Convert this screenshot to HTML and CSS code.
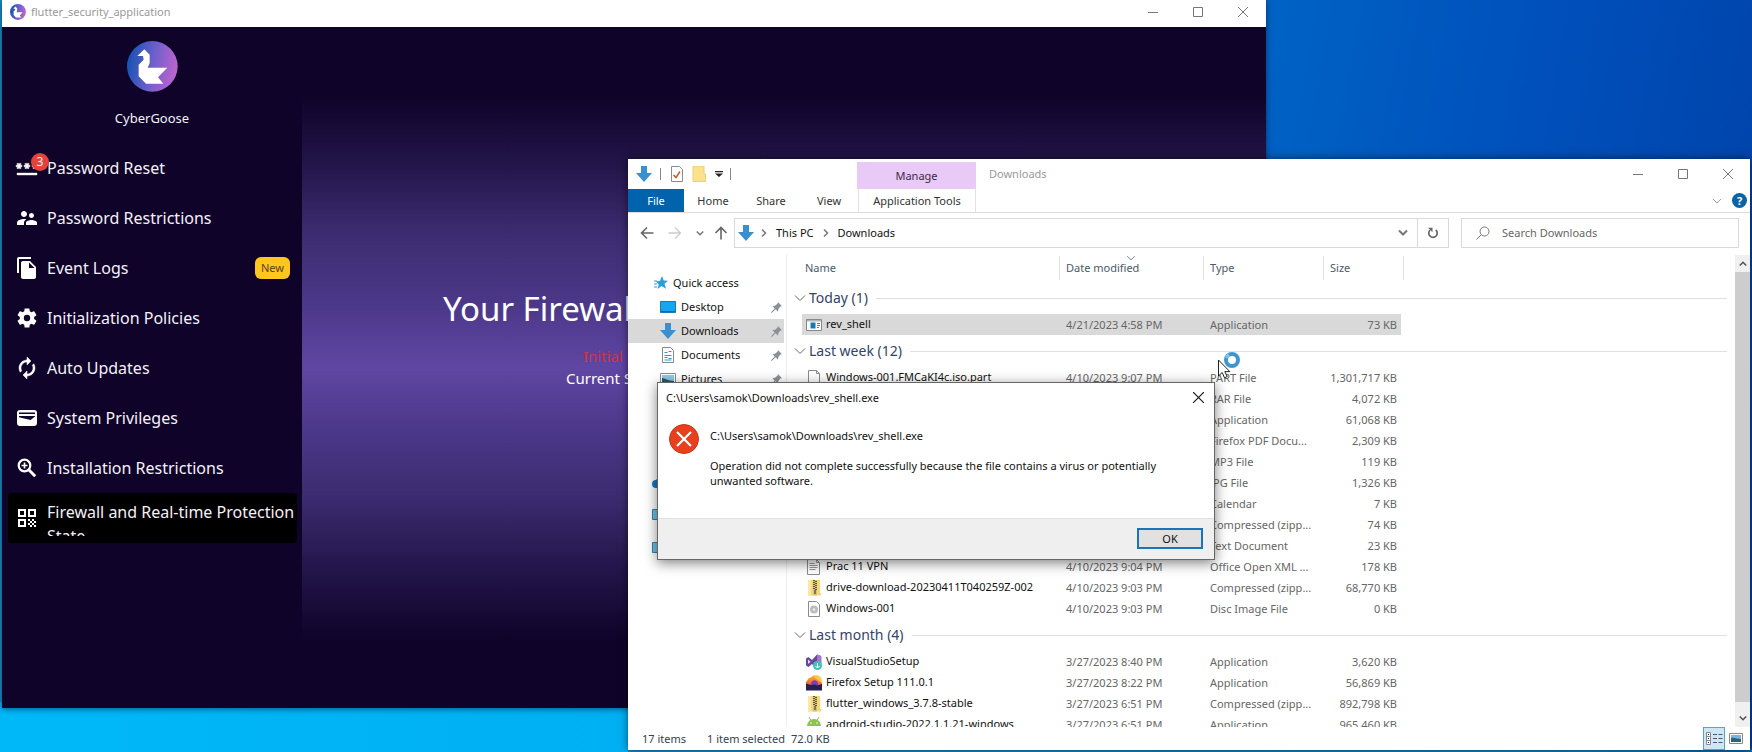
FILE: index.html
```html
<!DOCTYPE html>
<html lang="en">
<head>
<meta charset="utf-8">
<title>Desktop</title>
<link rel="stylesheet" href="styles.css">
</head>
<body>
<svg class="sprite" aria-hidden="true">
  <defs>
    <linearGradient id="goose-bg" x1="0" x2="1" y1="0.4" y2="0.6"><stop offset="0.05" stop-color="#1d54b4"/><stop offset="0.5" stop-color="#6f5fcb"/><stop offset="1" stop-color="#c264d0"/></linearGradient>
    <linearGradient id="fire" x1="0" x2="0" y1="0" y2="1"><stop offset="0" stop-color="#ffb52e"/><stop offset="1" stop-color="#f0453f"/></linearGradient>
    <symbol id="goose" viewBox="380 123 153 153"><circle cx="456" cy="199" r="76" fill="url(#goose-bg)"/><path d="M411 168l21-20 16 16v25l-6 14h59l-28 29 16 19h-52l-22-22v-35l15-15-2-11z" fill="#fff"/></symbol>
    <symbol id="down" viewBox="0 0 16 16"><path d="M5 0h6v7h5l-8 9-8-9h5z" fill="#3a8fd0"/></symbol>
    <symbol id="min" viewBox="0 0 10 10"><path d="M0 5.500h10" stroke="currentColor"/></symbol>
    <symbol id="max" viewBox="0 0 10 10"><path d="M.5.500h9v9h-9z" fill="none" stroke="currentColor"/></symbol>
    <symbol id="close" viewBox="0 0 10 10"><path d="M0 0l10 10M10 0L0 10" stroke="currentColor" fill="none"/></symbol>
    <symbol id="chev-down" viewBox="0 0 12 8"><path d="M1 1.500l5 5 5-5" stroke="currentColor" fill="none"/></symbol>
    <symbol id="chev-bold" viewBox="0 0 10 8"><path d="M1 1.500l4 4 4-4" stroke="currentColor" stroke-width="2" fill="none"/></symbol>
    <symbol id="chev-right" viewBox="0 0 6 8"><path d="M1 .500l3.500 3.500L1 7.500" stroke="#777" stroke-width="1.500" fill="none"/></symbol>
    <symbol id="pin" viewBox="0 0 12 12"><path d="M7.500 0L12 4.500l-1.700.300L8 7.500 7.700 10.500 5 8 .800 12 0 11.200 4 7 1.500 4.300l3-.300L7.200 1.700z" fill="#8a9096"/></symbol>
    <symbol id="page" viewBox="0 0 16 16"><path d="M2.500.500h8l3 3v12h-11z" fill="#fff" stroke="#8b8b8b"/><path d="M10.500.500v3h3" fill="none" stroke="#8b8b8b"/></symbol>
    <symbol id="text" viewBox="0 0 16 16"><path d="M1.500.500h9l3 3v12h-12z" fill="#fff" stroke="#8b8b8b"/><path d="M10.500.500v3h3M3.500 4.500h5M3.500 6.500h8M3.500 8.500h8M3.500 10.500h6" fill="none" stroke="#999"/></symbol>
    <symbol id="zip" viewBox="0 0 16 16"><path d="M2 0h12v13l1 0v2.500H2z" fill="#f5d873"/><path d="M2 0h3v15.500H2z" fill="#fae9a6"/><path d="M7 0h4v15.500H7z" fill="#d9c27a"/><path d="M8 0v10M10 1v9" stroke="#5d5738" stroke-dasharray="1 1" stroke-width="2"/><path d="M8 10h2v4H8z" fill="#777"/></symbol>
    <symbol id="disc" viewBox="0 0 16 16"><path d="M2.500.500h8l3 3v12h-11z" fill="#fff" stroke="#8b8b8b"/><circle cx="8" cy="8.500" r="4" fill="#b9bdc1"/><circle cx="8" cy="8.500" r="1.200" fill="#eee"/></symbol>
    <symbol id="exe" viewBox="0 0 16 16"><path d="M.5 2.500h15v11H.5z" fill="#fff" stroke="#888"/><path d="M1 3h14v1.500H1z" fill="#b5b5b5"/><path d="M4.500 5.500h5v6h-5z" fill="#1878ba"/><path d="M11 6.500h3M11 8.500h3M11 10.500h2" stroke="#777"/></symbol>
    <symbol id="vs" viewBox="0 0 16 16"><path d="M0 4.500L2.500 3 6 6l5-5.500L15 2v11l-4 2-5-5-3.500 3L0 11.500z" fill="#68489c"/><path d="M11 .500l4.500 2v10l-4.500 2z" fill="#9a7bd0"/><path d="M2 5.500v4.500l2.500-2.200z" fill="#e6dcfa"/><circle cx="11.500" cy="11.500" r="4.500" fill="#3cc4bd"/><path d="M11.500 9v4.500M9.500 12l2 2 2-2" stroke="#fff" fill="none"/></symbol>
    <symbol id="firefox" viewBox="0 0 16 16"><circle cx="10" cy="6" r="6" fill="#ffc94d"/><path d="M0 7l3-4 3-1 2-2 1 3 4 3 3 2v4H0z" fill="url(#fire)"/><path d="M5 9c0-5 7-5 7 0v4H5z" fill="#7a3fb5"/><path d="M0 9c2-1 3 1 5 1s3-1 5 0 4-1 6-1v6.500H0z" fill="#25204f"/></symbol>
    <symbol id="android" viewBox="0 0 16 16"><path d="M1 9a7 7 0 0 1 14 0z" fill="#8fc24a"/><path d="M3 0l2 3.500M13 0l-2 3.500" stroke="#8fc24a"/><circle cx="5" cy="6" r=".8" fill="#fff"/><circle cx="11" cy="6" r=".8" fill="#fff"/></symbol>
    <symbol id="monitor" viewBox="0 0 16 16"><path d="M.5 1.500h15v10H.5z" fill="#6cc3ea" stroke="#3f7fa5"/><path d="M5 14.500h6M8 12v2" stroke="#3f7fa5"/></symbol>
  </defs>
</svg>

<main class="desktop">
  <section class="app" aria-label="flutter_security_application">
    <header class="app-title">
      <svg class="app-logo"><use href="#goose"/></svg>
      <span class="app-name">flutter_security_application</span>
      <div class="win-buttons">
        <button aria-label="Minimize"><svg><use href="#min"/></svg></button>
        <button aria-label="Maximize"><svg><use href="#max"/></svg></button>
        <button aria-label="Close"><svg><use href="#close"/></svg></button>
      </div>
    </header>
    <div class="app-body">
      <aside class="sidebar">
        <div class="profile">
          <svg class="avatar"><use href="#goose"/></svg>
          <span>CyberGoose</span>
        </div>
        <nav class="menu">
          <a class="item" href="#reset"><span class="glyph"><svg viewBox="0 0 24 24"><path d="M2 17h20v2H2v-2zm1.150-4.050L4 11.470l.85 1.480 1.300-.75-.85-1.480H7v-1.500H5.300l.85-1.470L4.850 7 4 8.470 3.150 7l-1.300.75.85 1.470H1v1.500h1.700l-.85 1.480zm6.700-.75l1.300.75.85-1.480.85 1.480 1.300-.75-.85-1.480H15v-1.500h-1.700l.85-1.470-1.300-.75L12 8.470 11.150 7l-1.300.75.85 1.470H9v1.500h1.700zM23 9.220h-1.700l.85-1.470-1.300-.75L20 8.470 19.150 7l-1.300.75.85 1.470H17v1.500h1.700l-.85 1.480 1.300.75.85-1.480.85 1.480 1.300-.75-.85-1.480H23z" stroke="#fff" stroke-width=".4"/></svg><b class="count">3</b></span><span>Password Reset</span></a>
          <a class="item" href="#restrictions"><span class="glyph"><svg viewBox="0 0 24 24"><path d="M16.500 12c1.380 0 2.490-1.120 2.490-2.500S17.880 7 16.500 7 14 8.120 14 9.500s1.120 2.500 2.500 2.500zM9 11c1.660 0 2.990-1.340 2.990-3S10.660 5 9 5 6 6.340 6 8s1.340 3 3 3zm7.500 3c-1.830 0-5.500.92-5.500 2.750V19h11v-2.250c0-1.830-3.670-2.750-5.500-2.750zM9 13c-2.330 0-7 1.170-7 3.500V19h7v-2.250c0-.85.33-2.340 2.370-3.470C10.500 13.100 9.660 13 9 13z"/></svg></span><span>Password Restrictions</span></a>
          <a class="item" href="#logs"><span class="glyph"><svg viewBox="0 0 24 24"><path d="M16 1H4c-1.100 0-2 .9-2 2v14h2V3h12V1zm-1 4l6 6v10c0 1.100-.9 2-2 2H7.990C6.890 23 6 22.100 6 21l.01-14c0-1.100.89-2 1.990-2h7zm-1 7h5.500L14 6.500V12z"/></svg></span><span>Event Logs</span><em class="new">New</em></a>
          <a class="item" href="#policies"><span class="glyph"><svg viewBox="0 0 24 24"><path d="M19.140 12.940c.04-.3.06-.61.06-.94 0-.32-.02-.64-.07-.94l2.030-1.580c.18-.14.23-.41.12-.61l-1.920-3.320c-.12-.22-.37-.29-.59-.22l-2.390.96c-.5-.38-1.030-.7-1.620-.94l-.36-2.540c-.04-.24-.24-.41-.48-.41h-3.840c-.24 0-.43.17-.47.41l-.36 2.540c-.59.24-1.130.57-1.620.94l-2.390-.96c-.22-.08-.47 0-.59.22L2.740 8.870c-.12.21-.08.47.12.61l2.030 1.580c-.05.3-.09.63-.09.94s.02.64.07.94l-2.030 1.580c-.18.14-.23.41-.12.61l1.920 3.320c.12.22.37.29.59.22l2.390-.96c.5.38 1.030.7 1.620.94l.36 2.540c.05.24.24.41.48.41h3.840c.24 0 .44-.17.47-.41l.36-2.540c.59-.24 1.130-.56 1.620-.94l2.390.96c.22.08.47 0 .59-.22l1.920-3.320c.12-.22.07-.47-.12-.61zM12 15.200a3.200 3.200 0 1 1 0-6.400 3.200 3.200 0 0 1 0 6.400z"/></svg></span><span>Initialization Policies</span></a>
          <a class="item" href="#updates"><span class="glyph"><svg viewBox="0 0 24 24"><path d="M12 6v3l4-4-4-4v3c-4.420 0-8 3.580-8 8 0 1.570.46 3.030 1.240 4.260L6.700 14.800c-.45-.83-.7-1.790-.7-2.800 0-3.310 2.690-6 6-6zm6.760 1.740L17.300 9.200c.44.84.7 1.790.7 2.800 0 3.310-2.690 6-6 6v-3l-4 4 4 4v-3c4.420 0 8-3.580 8-8 0-1.570-.46-3.030-1.240-4.260z" stroke="#fff" stroke-width=".5"/></svg></span><span>Auto Updates</span></a>
          <a class="item" href="#privileges"><span class="glyph"><svg viewBox="0 0 24 24"><path fill-rule="evenodd" d="M5 4h14a3 3 0 0 1 3 3v10a3 3 0 0 1-3 3H5a3 3 0 0 1-3-3V7a3 3 0 0 1 3-3zm-1 2.500V8h16V6.500zM4 10v1.200l10.500 2.600c.8.200 1.400 0 2-.5L20 10.500V10z"/></svg></span><span>System Privileges</span></a>
          <a class="item" href="#installation"><span class="glyph"><svg viewBox="0 0 24 24"><g fill="none" stroke="#fff"><circle cx="9.500" cy="9.500" r="5.800" stroke-width="2.200"/><path d="M14 14l6.200 6.200" stroke-width="3"/><path d="M9.500 6.500v6M6.500 9.500h6" stroke-width="1.600"/></g></svg></span><span>Installation Restrictions</span></a>
          <a class="item active" href="#firewall"><span class="glyph"><svg viewBox="0 0 24 24"><path fill-rule="evenodd" d="M3 3h8v8H3zm2 2v4h4V5zM13 3h8v8h-8zm2 2v4h4V5zM3 13h8v8H3zm2 2v4h4v-4zM13 13h2v2h-2zM15 15h2v2h-2zM13 17h2v2h-2zM15 19h2v2h-2zM17 17h2v2h-2zM17 13h2v2h-2zM19 15h2v2h-2zM19 19h2v2h-2z"/></svg></span><span class="label">Firewall and Real-time Protection State</span></a>
        </nav>
      </aside>
      <div class="stage">
        <h1>Your Firewall</h1>
        <p class="initial">Initial</p>
        <p class="current">Current State</p>
      </div>
    </div>
  </section>

  <section class="explorer" aria-label="Downloads">
    <header class="ex-title">
      <div class="quick">
        <svg><use href="#down"/></svg><i class="bar"></i>
        <button aria-label="Properties"><svg viewBox="0 0 16 16"><path d="M2.500.500h8l3 3v12h-11z" fill="#fff" stroke="#8b8b8b"/><path d="M4.500 9l2.500 2.500 4-6" fill="none" stroke="#d2542a" stroke-width="1.500"/></svg></button>
        <button aria-label="New folder"><svg viewBox="0 0 16 16"><path d="M1 0h11v8h1.500v7.500H1z" fill="#fbe18b" stroke="#ead07a"/></svg></button>
        <button class="more" aria-label="Customize toolbar"><svg viewBox="0 0 8 6"><path d="M0 0h8v1.200H0zM0 2.500h8L4 6z" fill="#222"/></svg></button><i class="bar"></i>
      </div>
      <button class="manage">Manage</button>
      <span class="ex-name">Downloads</span>
      <div class="win-buttons">
        <button aria-label="Minimize"><svg><use href="#min"/></svg></button>
        <button aria-label="Maximize"><svg><use href="#max"/></svg></button>
        <button aria-label="Close"><svg><use href="#close"/></svg></button>
      </div>
    </header>
    <div class="ribbon">
      <button class="file">File</button><button>Home</button><button>Share</button><button>View</button><button class="tools">Application Tools</button>
      <div class="ribbon-end">
        <button class="expand" aria-label="Expand the ribbon"><svg><use href="#chev-down"/></svg></button>
        <button class="help" aria-label="Help">?</button>
      </div>
    </div>
    <div class="address">
      <div class="history">
        <button aria-label="Back"><svg viewBox="0 0 14 14"><path d="M13.500 7H1.500M7 1.500L1.500 7 7 12.500" fill="none" stroke="#666" stroke-width="1.600"/></svg></button>
        <button aria-label="Forward"><svg viewBox="0 0 14 14"><path d="M.5 7h12M7 1.500L12.500 7 7 12.500" fill="none" stroke="#ccc" stroke-width="1.300"/></svg></button>
        <button class="recent" aria-label="Recent locations"><svg><use href="#chev-bold"/></svg></button>
        <button aria-label="Up"><svg viewBox="0 0 14 14"><path d="M7 13.500V1.500M1.500 7L7 1.500 12.500 7" fill="none" stroke="#666" stroke-width="1.600"/></svg></button>
      </div>
      <div class="path">
        <svg class="path-icon"><use href="#down"/></svg>
        <svg class="sep"><use href="#chev-right"/></svg><a href="#pc">This PC</a>
        <svg class="sep"><use href="#chev-right"/></svg><a href="#downloads">Downloads</a>
        <button class="drop" aria-label="Previous locations"><svg><use href="#chev-bold"/></svg></button>
        <button class="refresh" aria-label="Refresh"><svg viewBox="0 0 12 12"><path d="M3 3.200a4.200 4.200 0 1 0 5.800-.2" fill="none" stroke="#666" stroke-width="1.700"/><path d="M1 .800h4.500v4.500z" fill="#666"/></svg></button>
      </div>
      <label class="search"><svg viewBox="0 0 14 14"><circle cx="8.500" cy="5.500" r="4.500" fill="none" stroke="#777"/><path d="M5 9l-4.500 4.500" stroke="#777"/></svg><input type="text" placeholder="Search Downloads" aria-label="Search Downloads"></label>
    </div>
    <div class="ex-body">
      <nav class="tree">
        <a class="root" href="#quick"><svg viewBox="0 0 14 14"><path d="M8 0l1.700 4.500 4.300.3-3.500 3 1.500 5L7.500 10l-4 3 1.200-4.500L2 5.500l4-.7z" fill="#2b9fdc"/><path d="M0 5h3M0 8h3M0 11h3" stroke="#2b9fdc"/></svg>Quick access</a>
        <a href="#desktop"><svg viewBox="0 0 16 16"><path d="M.5 2.500h15v11H.5z" fill="#18a4ee" stroke="#1679b8"/><path d="M1 12.500h14" stroke="#0d6ba8"/></svg>Desktop<svg class="pin"><use href="#pin"/></svg></a>
        <a class="current-dir" href="#dl"><svg><use href="#down"/></svg>Downloads<svg class="pin"><use href="#pin"/></svg></a>
        <a href="#documents"><svg viewBox="0 0 16 16"><path d="M2.500.500h8l3 3v12h-11z" fill="#fff" stroke="#7f8a92"/><path d="M4.500 5.500h3M8.500 4.500h3M4.500 8.500h7M4.500 10.500h3M8.500 11.500h3M4.500 13h7" stroke="#3c93ba"/></svg>Documents<svg class="pin"><use href="#pin"/></svg></a>
        <a href="#pictures"><svg viewBox="0 0 16 16"><path d="M.5 2.500h15v11H.5z" fill="#fff" stroke="#8b8b8b"/><path d="M2 4h12v8H2z" fill="#8fc7e8"/><path d="M2 7c3 0 6 3 12 3v2H2z" fill="#2a5b66"/></svg>Pictures<svg class="pin"><use href="#pin"/></svg></a>
        <div class="drives">
          <svg viewBox="0 0 16 16"><path d="M4 13a4 4 0 0 1 0-8 5 5 0 0 1 9 1 3.500 3.500 0 0 1 0 7z" fill="#1879c0"/></svg>
          <svg><use href="#monitor"/></svg>
          <svg><use href="#monitor"/></svg>
        </div>
      </nav>
      <div class="list">
        <table>
          <colgroup><col class="c-gap"><col class="c-name"><col class="c-date"><col class="c-type"><col class="c-size"><col></colgroup>
          <thead><tr><th colspan="2"><span class="first">Name</span></th><th><span>Date modified<svg class="sort"><use href="#chev-down"/></svg></span></th><th><span>Type</span></th><th><span>Size</span></th><th></th></tr></thead>
          <tbody>
            <tr class="group"><td colspan="6"><div><svg><use href="#chev-down"/></svg>Today (1)<i></i></div></td></tr>
            <tr class="selected"><td></td><td><svg><use href="#exe"/></svg>rev_shell</td><td>4/21/2023 4:58 PM</td><td>Application</td><td>73 KB</td><td></td></tr>
            <tr class="group"><td colspan="6"><div><svg><use href="#chev-down"/></svg>Last week (12)<i></i></div></td></tr>
            <tr><td></td><td><svg><use href="#page"/></svg>Windows-001.FMCaKI4c.iso.part</td><td>4/10/2023 9:07 PM</td><td>PART File</td><td>1,301,717 KB</td><td></td></tr>
            <tr><td></td><td></td><td></td><td>RAR File</td><td>4,072 KB</td><td></td></tr>
            <tr><td></td><td></td><td></td><td>Application</td><td>61,068 KB</td><td></td></tr>
            <tr><td></td><td></td><td></td><td>Firefox PDF Docu...</td><td>2,309 KB</td><td></td></tr>
            <tr><td></td><td></td><td></td><td>MP3 File</td><td>119 KB</td><td></td></tr>
            <tr><td></td><td></td><td></td><td>JPG File</td><td>1,326 KB</td><td></td></tr>
            <tr><td></td><td></td><td></td><td>Calendar</td><td>7 KB</td><td></td></tr>
            <tr><td></td><td></td><td></td><td>Compressed (zipp...</td><td>74 KB</td><td></td></tr>
            <tr><td></td><td></td><td></td><td>Text Document</td><td>23 KB</td><td></td></tr>
            <tr><td></td><td><svg><use href="#text"/></svg>Prac 11 VPN</td><td>4/10/2023 9:04 PM</td><td>Office Open XML ...</td><td>178 KB</td><td></td></tr>
            <tr><td></td><td><svg><use href="#zip"/></svg>drive-download-20230411T040259Z-002</td><td>4/10/2023 9:03 PM</td><td>Compressed (zipp...</td><td>68,770 KB</td><td></td></tr>
            <tr><td></td><td><svg><use href="#disc"/></svg>Windows-001</td><td>4/10/2023 9:03 PM</td><td>Disc Image File</td><td>0 KB</td><td></td></tr>
            <tr class="group"><td colspan="6"><div><svg><use href="#chev-down"/></svg>Last month (4)<i></i></div></td></tr>
            <tr><td></td><td><svg><use href="#vs"/></svg>VisualStudioSetup</td><td>3/27/2023 8:40 PM</td><td>Application</td><td>3,620 KB</td><td></td></tr>
            <tr><td></td><td><svg><use href="#firefox"/></svg>Firefox Setup 111.0.1</td><td>3/27/2023 8:22 PM</td><td>Application</td><td>56,869 KB</td><td></td></tr>
            <tr><td></td><td><svg><use href="#zip"/></svg>flutter_windows_3.7.8-stable</td><td>3/27/2023 6:51 PM</td><td>Compressed (zipp...</td><td>892,798 KB</td><td></td></tr>
            <tr><td></td><td><svg><use href="#android"/></svg>android-studio-2022.1.1.21-windows</td><td>3/27/2023 6:51 PM</td><td>Application</td><td>965,460 KB</td><td></td></tr>
          </tbody>
        </table>
      </div>
      <div class="scroll">
        <button class="flip" aria-label="Scroll up"><svg><use href="#chev-bold"/></svg></button>
        <i class="thumb"></i>
        <button aria-label="Scroll down"><svg><use href="#chev-bold"/></svg></button>
      </div>
    </div>
    <footer class="status">
      <span>17 items</span><span class="sel">1 item selected</span><span>72.0 KB</span>
      <div class="views">
        <button class="on" aria-label="Details view"><svg viewBox="0 0 17 13"><path d="M.5.500h4v12h-4zM.5 4.500h4M.5 8.500h4" fill="#fff" stroke="#889"/><path d="M2 2.500h1M2 6.500h1M2 10.500h1" stroke="#222"/><path d="M7 2.500h4M12.500 2.500h4M7 6.500h4M12.500 6.500h4M7 10.500h4M12.500 10.500h4" stroke="#556"/></svg></button>
        <button aria-label="Large thumbnails"><svg viewBox="0 0 14 11"><path d="M.5.500h13v10H.5z" fill="#fff" stroke="#888"/><path d="M2 2h10v7H2z" fill="#7db4e6"/><path d="M2 5c3-1 6 1 10 1v3H2z" fill="#2c6570"/></svg></button>
      </div>
    </footer>
  </section>

  <section class="dialog" role="alertdialog" aria-label="Error">
    <header><span>C:\Users\samok\Downloads\rev_shell.exe</span><button aria-label="Close"><svg><use href="#close"/></svg></button></header>
    <div class="message">
      <svg viewBox="0 0 30 30"><circle cx="15" cy="15" r="14.500" fill="#e8401f" stroke="#c4351a"/><path d="M8 8l14 14M22 8L8 22" stroke="#fff" stroke-width="2.200"/></svg>
      <div><p>C:\Users\samok\Downloads\rev_shell.exe</p><p>Operation did not complete successfully because the file contains a virus or potentially unwanted software.</p></div>
    </div>
    <footer><button>OK</button></footer>
  </section>

  <svg class="pointer" viewBox="0 0 24 28" aria-hidden="true"><circle cx="15" cy="9" r="6" fill="none" stroke="#3f95cf" stroke-width="4"/><path d="M9.500 7a6 6 0 0 1 2.500-3.200" fill="none" stroke="#7cc8ea" stroke-width="3"/><path d="M1.500 9v16l3.700-3.500 2.300 5.300 2.700-1.200-2.400-5h5z" fill="#fff" stroke="#222"/></svg>
</main>
</body>
</html>
```

FILE: styles.css
```css
* { box-sizing: border-box; }
body { margin: 0; font-family: "Noto Sans", "Open Sans", sans-serif; font-size: 11px; line-height: 16px; color: #111; }
h1, p { margin: 0; font-weight: 400; }
a { color: inherit; text-decoration: none; }
button { padding: 0; border: 0; background: none; font: inherit; color: inherit; display: flex; align-items: center; justify-content: center; }
svg { flex: none; display: block; }
.sprite { position: absolute; width: 0; height: 0; }

.desktop {
  position: relative; height: 100vh; min-height: 720px; overflow: hidden;
  background:
    linear-gradient(90deg, #1b8cc0, #1480b5 55%, #084a94 75%, #053a80) 628px 100% / 100% 3px no-repeat,
    linear-gradient(90deg, #00b8f8, #00b0f2) 0 100% / 640px 50px no-repeat,
    linear-gradient(100deg, #1b8cc0 0%, #1b8cc0 20%, #0062c4 68%, #0050bb 82%, #0040a6 100%);
}

/* Security application */
.app { position: absolute; left: 2px; right: 486px; top: 0; height: 708px; display: flex; flex-direction: column; box-shadow: 0 1px 6px rgba(0, 20, 50, .6); }
.app-title { display: flex; align-items: center; height: 27px; padding: 0 18px 4px 8px; background: #fff; color: #999; }
.app-logo { width: 16px; height: 16px; margin-right: 5px; }
.win-buttons { display: flex; gap: 35px; margin-left: auto; color: #777; }
.win-buttons svg { width: 10px; height: 10px; }
.app-body { flex: 1; display: flex; min-height: 0; }
.sidebar { width: 300px; background: #0f0329; color: #f4f1f8; }
.profile { display: flex; flex-direction: column; align-items: center; gap: 16px; padding: 14px 0 15px; font-size: 13px; line-height: 20px; }
.avatar { width: 51px; height: 51px; }
.menu { padding: 0 5px 0 6px; }
.item { display: flex; align-items: center; gap: 8px; height: 50px; padding-left: 7px; font-size: 16px; line-height: 24px; }
.item.active { background: #000; border-radius: 4px; }
.item .label { height: 36px; overflow: hidden; }
.glyph { position: relative; flex: none; }
.glyph svg { width: 24px; height: 24px; fill: #fff; }
.count { position: absolute; left: 16px; top: -3px; width: 18px; height: 18px; border-radius: 50%; background: #e5413d; font-size: 12px; line-height: 18px; font-weight: 400; text-align: center; }
.new { margin: 0 7px 0 auto; padding: 3px 6px; border-radius: 6px; background: #ffc61e; color: #55430f; font-size: 11px; line-height: 16px; font-style: normal; }
.stage { flex: 1; padding-top: 257px; color: #fff; background: linear-gradient(#0f0329 10%, #221549 20%, #3c2b70 30%, #4a3787 40%, #5f46a3 50%, #4a3787 60%, #3c2b70 69%, #221549 80%, #0f0329 90%); }
.stage h1 { padding-left: 141px; font-size: 33px; line-height: 50px; }
.stage p { font-size: 15px; line-height: 22px; }
.stage .initial { margin-top: 11px; padding-left: 281px; color: #cf3547; }
.stage .current { padding-left: 264px; }

/* File explorer */
.explorer { position: absolute; left: 628px; right: 2px; top: 159px; bottom: 2px; display: flex; flex-direction: column; background: #fff; box-shadow: 0 0 8px rgba(0, 0, 0, .55); }
.ex-title { display: flex; height: 30px; padding-right: 17px; }
.quick { display: flex; align-items: center; gap: 8px; width: 229px; padding-left: 8px; }
.quick svg { width: 16px; height: 16px; }
.quick .bar { width: 1px; height: 12px; background: #888; }
.quick button { margin-right: -1px; }
.quick .more svg { width: 8px; height: 6px; }
.manage { width: 119px; margin-top: 3px; background: #e9c9f6; color: #3a2b4a; }
.ex-name { padding: 7px 0 0 13px; color: #999; }
.ex-title .win-buttons { align-items: center; }
.ribbon { display: flex; height: 24px; border-bottom: 1px solid #dcdcdc; color: #333; }
.ribbon > button { width: 58px; }
.ribbon .file { width: 56px; background: #0063ab; color: #fff; }
.ribbon .tools { width: 118px; border: solid #e2e2e2; border-width: 0 1px; }
.ribbon-end { display: flex; align-items: center; gap: 10px; margin-left: auto; padding-right: 3px; color: #888; }
.expand svg { width: 10px; height: 8px; }
.help { width: 15px; height: 15px; border-radius: 50%; background: #0b62a8; color: #fff; font-weight: 700; }
.address { display: flex; height: 42px; padding: 5px 11px 7px 12px; gap: 12px; }
.history { display: flex; align-items: center; gap: 14px; width: 82px; color: #777; }
.history svg { width: 14px; height: 14px; }
.history .recent { margin-right: -4px; }
.history .recent svg { width: 8px; height: 7px; }
.path { flex: 1; display: flex; align-items: center; border: 1px solid #d9d9d9; padding-left: 3px; }
.path-icon { width: 16px; height: 16px; }
.sep { width: 6px; height: 8px; margin: 0 9px 0 7px; }
a + .sep { margin-left: 9px; }
.drop { margin-left: auto; width: 28px; color: #777; }
.drop svg { width: 10px; height: 8px; }
.refresh { width: 31px; align-self: stretch; border-left: 1px solid #d9d9d9; }
.refresh svg { width: 12px; height: 12px; }
.search { display: flex; align-items: center; gap: 12px; width: 278px; padding-left: 14px; border: 1px solid #d9d9d9; }
.search svg { width: 14px; height: 14px; }
.search input { flex: 1; min-width: 0; padding: 0; border: 0; outline: 0; font: inherit; }
.search input::placeholder { color: #666; opacity: 1; }
.ex-body { flex: 1; display: flex; min-height: 0; }
.tree { width: 159px; padding-top: 16px; border-right: 1px solid #eee; overflow: hidden; }
.tree a { display: flex; align-items: center; gap: 5px; height: 24px; margin-right: 2px; padding: 0 2px 0 32px; }
.tree a.root { padding-left: 26px; }
.tree svg { width: 16px; height: 16px; }
.tree .root svg { width: 14px; height: 14px; }
.tree a .pin { width: 11px; height: 11px; margin-left: auto; }
.current-dir { background: #d9d9d9; }
.drives { display: grid; gap: 17px; padding: 84px 0 0 24px; }
.list { flex: 1; min-width: 0; padding-top: 1px; overflow: hidden; }
table { width: 100%; border-collapse: collapse; table-layout: fixed; }
.c-gap { width: 15px; }
.c-name { width: 258px; }
.c-date { width: 144px; }
.c-type { width: 120px; }
.c-size { width: 80px; }
th { height: 26px; padding: 0 0 2px; font-weight: 400; text-align: left; color: #4c5a6b; }
th span { position: relative; display: block; height: 24px; padding-left: 6px; line-height: 24px; border-right: 1px solid #e2e2e2; }
th .first { padding-left: 18px; }
.sort { position: absolute; left: 66px; top: -1px; width: 10px; height: 6px; }
td { height: 21px; padding: 0 0 0 6px; color: #666; white-space: nowrap; }
td:nth-child(1) { padding: 0; }
td:nth-child(2) { padding-left: 4px; color: #111; }
td:nth-child(5) { padding: 0 7px 0 0; text-align: right; }
td svg { display: inline-block; width: 16px; height: 16px; margin-right: 4px; vertical-align: middle; }
.selected td:nth-child(n+2):nth-child(-n+4) { background: #d9d9d9; }
.selected td:nth-child(5) { background: linear-gradient(#d9d9d9, #d9d9d9) 0 0 / calc(100% - 3px) 100% no-repeat; }
.group div { display: flex; align-items: center; height: 32px; padding: 0 8px 0 7px; font-size: 14px; color: #33436b; }
.group svg { width: 12px; height: 8px; margin-right: 3px; color: #666; }
.group i { flex: 1; height: 1px; margin-left: 8px; background: #e0e0e0; }
.scroll { width: 15px; display: flex; flex-direction: column; background: #f0f0f0; color: #555; }
.scroll button { height: 17px; }
.scroll svg { width: 8px; height: 7px; }
.scroll .flip svg { transform: rotate(180deg); }
.thumb { flex: 1; margin-bottom: 8px; background: #cdcdcd; }
.status { display: flex; align-items: center; height: 23px; padding-left: 14px; color: #33434f; }
.status .sel { margin: 0 6px 0 21px; }
.views { display: flex; align-self: stretch; gap: 4px; margin-left: auto; padding-right: 7px; }
.views .on { width: 22px; background: #cce8f6; border: 1px solid #5aa6b8; }
.views .on svg { width: 17px; height: 13px; }
.views button:last-child svg { width: 14px; height: 11px; }

/* Error dialog */
.dialog { position: absolute; left: 657px; top: 382px; width: 558px; display: flex; flex-direction: column; border: 1px solid #666; background: #fff; color: #111; box-shadow: 0 3px 12px rgba(0, 0, 0, .5); }
.dialog header { display: flex; align-items: center; justify-content: space-between; height: 29px; padding: 0 10px 0 8px; }
.dialog header svg { width: 11px; height: 11px; }
.message { display: flex; gap: 11px; padding: 12px 40px 30px 11px; line-height: 15px; }
.message svg { width: 30px; height: 30px; }
.message p { margin: 4px 0 15px; }
.message p + p { margin-bottom: 0; }
.dialog footer { display: flex; justify-content: flex-end; height: 41px; padding: 9px 11px; background: #efefef; border-top: 1px solid #e0e0e0; }
.dialog footer button { width: 66px; height: 21px; border: 2px solid #1b74b5; background: #e1e1e1; }

.pointer { position: absolute; left: 1217px; top: 351px; width: 24px; height: 28px; }
```
